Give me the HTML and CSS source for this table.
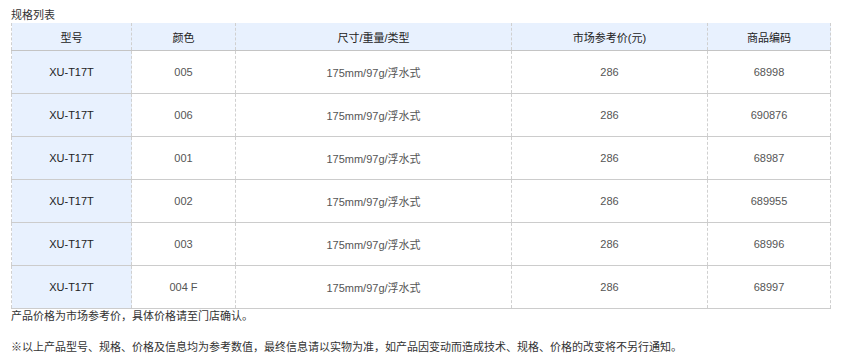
FILE: index.html
```html
<!DOCTYPE html>
<html lang="zh-CN">
<head>
<meta charset="utf-8">
<title>规格列表</title>
<link rel="stylesheet" href="styles.css">
</head>
<body>
<div class="page">
  <div class="title">规格列表</div>
  <table class="spec">
    <colgroup>
      <col class="c1"><col class="c2"><col class="c3"><col class="c4"><col class="c5">
    </colgroup>
    <thead>
      <tr><th>型号</th><th>颜色</th><th>尺寸/重量/类型</th><th>市场参考价(元)</th><th>商品编码</th></tr>
    </thead>
    <tbody>
      <tr><td class="model">XU-T17T</td><td>005</td><td>175mm/97g/浮水式</td><td>286</td><td>68998</td></tr>
      <tr><td class="model">XU-T17T</td><td>006</td><td>175mm/97g/浮水式</td><td>286</td><td>690876</td></tr>
      <tr><td class="model">XU-T17T</td><td>001</td><td>175mm/97g/浮水式</td><td>286</td><td>68987</td></tr>
      <tr><td class="model">XU-T17T</td><td>002</td><td>175mm/97g/浮水式</td><td>286</td><td>689955</td></tr>
      <tr><td class="model">XU-T17T</td><td>003</td><td>175mm/97g/浮水式</td><td>286</td><td>68996</td></tr>
      <tr><td class="model">XU-T17T</td><td>004 F</td><td>175mm/97g/浮水式</td><td>286</td><td>68997</td></tr>
    </tbody>
  </table>
  <p class="note first">产品价格为市场参考价，具体价格请至门店确认。</p>
  <p class="note second">※以上产品型号、规格、价格及信息均为参考数值，最终信息请以实物为准，如产品因变动而造成技术、规格、价格的改变将不另行通知。</p>
</div>
</body>
</html>
```
FILE: styles.css
```css
html, body {
  margin: 0;
  padding: 0;
  background: #ffffff;
}
.page {
  padding: 8px 0 0 11px;
  font-family: "Liberation Sans", "Noto Sans CJK SC", sans-serif;
  font-size: 11px;
  color: #333;
}
.title {
  line-height: 15px;
  height: 15px;
  color: #333;
}
.spec {
  border-collapse: collapse;
  table-layout: fixed;
  width: 819px;
  border-left: 1px dashed #cfcfcf;
  border-right: 1px dashed #cfcfcf;
}
.c1 { width: 120px; }
.c2 { width: 104px; }
.c3 { width: 276px; }
.c4 { width: 196px; }
.c5 { width: 123px; }
.spec th, .spec td {
  text-align: center;
  padding: 0;
  border-left: 1px dashed #d0d0d0;
  border-bottom: 1px solid #cccccc;
}
.spec th {
  height: 27px;
  font-weight: normal;
  background: #e8f1fe;
  color: #222;
  border-bottom: 1px solid #c4c4c4;
}
.spec td {
  height: 42px;
  color: #555;
}
.spec td.model {
  background: #e8f1fe;
  color: #222;
}
.note {
  margin: 0;
  line-height: 14px;
  color: #333;
}
.note.first {
  margin-top: 0;
}
.note.second {
  margin-top: 17px;
}
```
